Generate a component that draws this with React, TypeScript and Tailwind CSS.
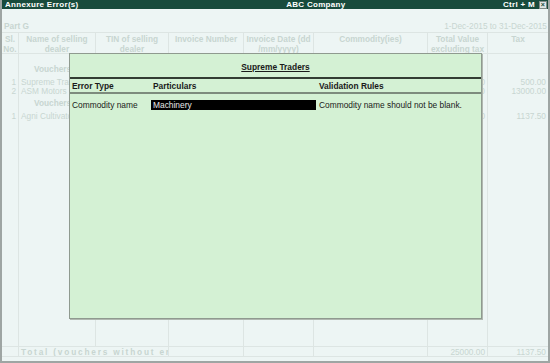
import React from "react";

const cols = "grid-cols-[17px_77px_73px_75px_70px_114px_60px_1fr]";

const headers = [
  ["Sl.", "No."],
  ["Name of selling", "dealer"],
  ["TIN of selling", "dealer"],
  ["Invoice Number"],
  ["Invoice Date (dd", "/mm/yyyy)"],
  ["Commodity(ies)"],
  ["Total Value", "excluding tax"],
  ["Tax"],
];

type Row = { kind: "group"; label: string } | { kind: "item"; sl: string; name: string; total: string; tax: string };

const rows: Row[] = [
  { kind: "group", label: "Vouchers" },
  { kind: "item", sl: "1", name: "Supreme Traders", total: "10000.00", tax: "500.00" },
  { kind: "item", sl: "2", name: "ASM Motors", total: "260000.00", tax: "13000.00" },
  { kind: "group", label: "Vouchers" },
  { kind: "item", sl: "1", name: "Agni Cultivators", total: "22750.00", tax: "1137.50" },
];

function Cell({ children, className = "" }: { children?: React.ReactNode; className?: string }) {
  return <div className={`border-r border-[#dde5e3] overflow-hidden whitespace-nowrap ${className}`}>{children}</div>;
}

// one column of the faded voucher list
function ListCol({ pick, className = "" }: { pick: (r: Row) => React.ReactNode; className?: string }) {
  return (
    <Cell className={`pt-[10px] ${className}`}>
      {rows.map((r, i) =>
        r.kind === "group" ? (
          <div key={i} className={`h-[10px] mb-[3px] ${i > 0 ? "mt-[3px]" : ""}`}>
            {pick(r)}
          </div>
        ) : (
          <div key={i} className="h-[9px]">
            {pick(r)}
          </div>
        )
      )}
    </Cell>
  );
}

function ErrorDialog() {
  return (
    <div className="absolute left-[67px] top-[53px] w-[413px] h-[266px] bg-[#d4f1d4] border border-[#8f9a8f] shadow-[1px_1px_0_#b0b8b0] text-[#1a1a1a] text-[8.4px]">
      <div className="h-[23px] flex items-center justify-center pt-[2px]">
        <span className="font-bold underline">Supreme Traders</span>
      </div>
      <div className="h-[2px] bg-[#333d33]" />
      <div className="flex items-center h-[13px] font-bold">
        <span className="w-[81px] pl-[2px]">Error Type</span>
        <span className="w-[166px] pl-[2px]">Particulars</span>
        <span className="pl-[2px]">Validation Rules</span>
      </div>
      <div className="h-[2px] bg-[#7d8b7d]" />
      <div className="flex items-center mt-[6px] h-[10px]">
        <span className="w-[81px] pl-[2px]">Commodity name</span>
        <span className="w-[165px] h-[10px] bg-black text-[#e8e8e8] pl-[2px] leading-[10px] mr-[3px]">Machinery</span>
        <span>Commodity name should not be blank.</span>
      </div>
    </div>
  );
}

export default function App() {
  return (
    <div className="w-[550px] h-[363px] relative bg-[#edf5f4] border-l-2 border-r-2 border-b-2 border-[#9ea5a3] flex flex-col text-[8.3px] leading-[10px] font-['Liberation_Sans',Arial,sans-serif] overflow-hidden">
      {/* title bar */}
      <div className="h-[9px] bg-[#184b3c] text-white font-bold flex items-center justify-between pl-[3px] pr-[1px] text-[8px] tracking-[0.3px] leading-[9px]">
        <span>Annexure Error(s)</span>
        <span className="pl-[50px]">ABC Company</span>
        <span className="flex items-center gap-[4px]">
          Ctrl + M
          <span className="w-[8px] h-[8px] bg-[#dfe5e3] border border-[#7f8a86] text-[#184b3c] text-[7px] leading-[6px] text-center">×</span>
        </span>
      </div>

      <div className="h-[13px]" />
      <div className="flex justify-between pl-[2px] pr-[1px] text-[#c8d5d1] font-bold h-[9px] items-end">
        <span>Part G</span>
        <span className="font-normal">1-Dec-2015 to 31-Dec-2015</span>
      </div>

      {/* header */}
      <div className={`grid ${cols} border-t border-b border-[#dde5e3] h-[22px] mt-[1px] text-[#c8d5d1] font-bold`}>
        {headers.map((h, i) => (
          <Cell key={i} className={`text-center pt-[1px] ${i === headers.length - 1 ? "border-r-0" : ""}`}>
            {h.map((l) => (
              <div key={l}>{l}</div>
            ))}
          </Cell>
        ))}
      </div>

      {/* body */}
      <div className={`grid ${cols} flex-1 text-[#c8d5d1]`}>
        <ListCol className="text-right pr-[2px]" pick={(r) => (r.kind === "item" ? r.sl : null)} />
        <ListCol
          className="pl-[2px]"
          pick={(r) => (r.kind === "group" ? <span className="font-bold pl-[13px]">{r.label}</span> : r.name)}
        />
        <Cell />
        <Cell />
        <Cell />
        <Cell />
        <ListCol className="text-right pr-[2px]" pick={(r) => (r.kind === "item" ? r.total : null)} />
        <ListCol className="text-right pr-[2px] border-r-0" pick={(r) => (r.kind === "item" ? r.tax : null)} />
      </div>

      {/* footer */}
      <div className={`grid ${cols} border-t border-b border-[#dde5e3] h-[11px] text-[#c8d5d1]`}>
        <Cell />
        <div className="col-span-2 border-r border-[#dde5e3] pl-[2px] tracking-[1.8px] font-bold whitespace-nowrap overflow-hidden">
          Total (vouchers without errors)
        </div>
        <Cell />
        <Cell />
        <Cell />
        <Cell className="text-right pr-[2px]">25000.00</Cell>
        <Cell className="text-right pr-[2px] border-r-0">1137.50</Cell>
      </div>
      <div className="h-[4px]" />

      <ErrorDialog />
    </div>
  );
}
